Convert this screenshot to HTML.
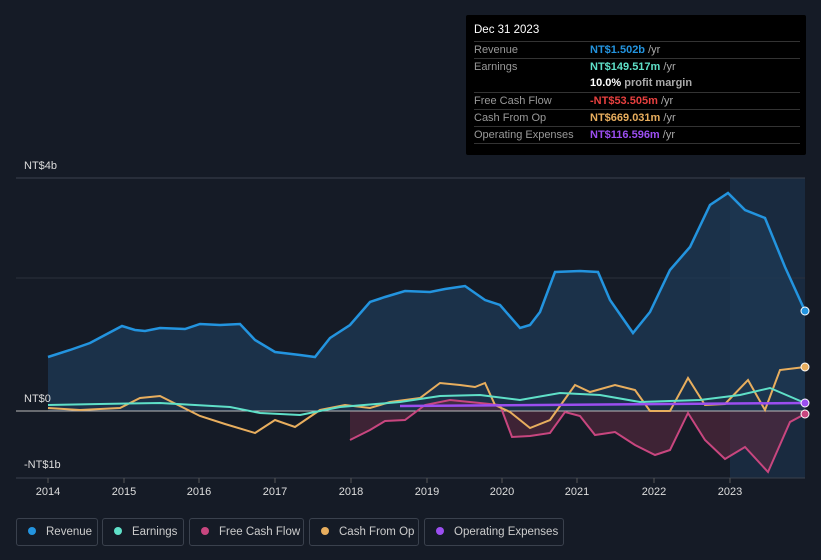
<!DOCTYPE html>
<html><head><style>
body{margin:0;width:821px;height:560px;background:#151b26;font-family:"Liberation Sans",sans-serif;overflow:hidden;position:relative}
.tt{position:absolute;left:466px;top:15px;width:340px;height:140px;background:#000;border-radius:2px}
.tt .h{position:absolute;left:8px;top:9px;color:#fff;font-size:11.5px}
.row{position:absolute;left:8px;width:326px;border-top:1px solid #333;font-size:11px;color:#999;height:17px;line-height:17px}
.row b{position:absolute;left:116px;font-weight:bold}
.row span.u{color:#aaa}
.leg{position:absolute;top:518px;height:28px;border:1px solid #3a414d;border-radius:3px;color:#ccc;font-size:11.5px;line-height:26px;box-sizing:border-box;white-space:nowrap;overflow:hidden}
.leg i{display:inline-block;width:8px;height:8px;border-radius:50%;margin:0 10px 0 11px;vertical-align:0}
.yl{position:absolute;color:#ddd;font-size:11px}
.xl{position:absolute;top:486px;color:#ddd;font-size:11px;width:40px;text-align:center}
</style></head><body>
<svg width="821" height="560" style="position:absolute;left:0;top:0">
<rect x="730" y="178" width="75" height="300" fill="#1c3550" opacity="0.6"/>
<line x1="16" y1="178" x2="805" y2="178" stroke="#3a414d"/>
<line x1="16" y1="278" x2="805" y2="278" stroke="#2a303c"/>
<line x1="16" y1="478" x2="805" y2="478" stroke="#3a414d"/>
<path d="M48,357 L70,350 L90,343 L105,335 L122,326 L135,330 L145,331 L160,328 L185,329 L200,324 L220,325 L240,324 L255,340 L275,352 L300,355 L315,357 L330,338 L350,325 L370,302 L385,297 L405,291 L430,292 L445,289 L465,286 L485,300 L500,305 L520,328 L530,325 L540,312 L555,272 L580,271 L598,272 L610,300 L633,333 L650,312 L670,270 L690,247 L710,205 L728,193 L745,210 L765,218 L785,267 L805,311 L805,411 L48,411Z" fill="#1d3a55" opacity="0.75"/>
<path d="M350,440 L370,430 L385,421 L405,420 L425,405 L450,400 L480,403 L500,405 L512,437 L530,436 L550,433 L565,412 L580,416 L595,435 L615,432 L635,445 L655,455 L670,450 L688,413 L705,440 L725,459 L745,447 L768,472 L790,422 L805,414 L805,411 L350,411Z" fill="#5a2a3f" opacity="0.6"/>
<line x1="16" y1="411" x2="805" y2="411" stroke="#bbb"/>
<path d="M48,357 L70,350 L90,343 L105,335 L122,326 L135,330 L145,331 L160,328 L185,329 L200,324 L220,325 L240,324 L255,340 L275,352 L300,355 L315,357 L330,338 L350,325 L370,302 L385,297 L405,291 L430,292 L445,289 L465,286 L485,300 L500,305 L520,328 L530,325 L540,312 L555,272 L580,271 L598,272 L610,300 L633,333 L650,312 L670,270 L690,247 L710,205 L728,193 L745,210 L765,218 L785,267 L805,311" fill="none" stroke="#2394df" stroke-width="2.5"/>
<path d="M350,440 L370,430 L385,421 L405,420 L425,405 L450,400 L480,403 L500,405 L512,437 L530,436 L550,433 L565,412 L580,416 L595,435 L615,432 L635,445 L655,455 L670,450 L688,413 L705,440 L725,459 L745,447 L768,472 L790,422 L805,414" fill="none" stroke="#c8467f" stroke-width="2"/>
<path d="M48,408 L80,410 L120,408 L140,398 L160,396 L180,406 L200,416 L225,424 L255,433 L275,420 L295,427 L320,410 L345,405 L370,408 L390,402 L420,398 L440,383 L460,385 L475,387 L485,383 L495,405 L510,412 L530,428 L550,420 L575,385 L590,392 L615,385 L635,390 L650,411 L670,411 L688,378 L705,405 L725,404 L748,380 L765,410 L780,370 L805,367" fill="none" stroke="#e8ae5e" stroke-width="2"/>
<path d="M48,405 L100,404 L160,403 L230,407 L260,413 L300,415 L340,407 L400,402 L440,396 L480,395 L520,400 L560,393 L600,395 L640,402 L700,400 L740,395 L770,388 L805,403" fill="none" stroke="#5fe0c8" stroke-width="2"/>
<path d="M400,406 L805,403" fill="none" stroke="#9b4ef0" stroke-width="2.5"/>
<circle cx="805" cy="311" r="4" fill="#2394df" stroke="#fff" stroke-width="1"/>
<circle cx="805" cy="367" r="4" fill="#e8ae5e" stroke="#fff" stroke-width="1"/>
<circle cx="805" cy="403" r="4" fill="#9b4ef0" stroke="#fff" stroke-width="1"/>
<circle cx="805" cy="414" r="4" fill="#c8467f" stroke="#fff" stroke-width="1"/>
<g stroke="#555"><line x1="48" y1="478" x2="48" y2="483"/><line x1="124" y1="478" x2="124" y2="483"/><line x1="199" y1="478" x2="199" y2="483"/><line x1="275" y1="478" x2="275" y2="483"/><line x1="351" y1="478" x2="351" y2="483"/><line x1="427" y1="478" x2="427" y2="483"/><line x1="502" y1="478" x2="502" y2="483"/><line x1="577" y1="478" x2="577" y2="483"/><line x1="654" y1="478" x2="654" y2="483"/><line x1="730" y1="478" x2="730" y2="483"/></g>
</svg>
<div class="yl" style="left:24px;top:160px">NT$4b</div>
<div class="yl" style="left:24px;top:393px">NT$0</div>
<div class="yl" style="left:24px;top:459px">-NT$1b</div>
<div class="xl" style="left:28px">2014</div><div class="xl" style="left:104px">2015</div><div class="xl" style="left:179px">2016</div><div class="xl" style="left:255px">2017</div><div class="xl" style="left:331px">2018</div><div class="xl" style="left:407px">2019</div><div class="xl" style="left:482px">2020</div><div class="xl" style="left:557px">2021</div><div class="xl" style="left:634px">2022</div><div class="xl" style="left:710px">2023</div>
<div class="tt">
<div class="h">Dec 31 2023</div>
<div class="row" style="top:26px">Revenue<b style="color:#2394df">NT$1.502b <span class="u" style="font-weight:normal">/yr</span></b></div>
<div class="row" style="top:43px">Earnings<b style="color:#5fe0c8">NT$149.517m <span class="u" style="font-weight:normal">/yr</span></b></div>
<div class="row" style="top:60px;border:none"><b style="color:#fff">10.0% <span class="u">profit margin</span></b></div>
<div class="row" style="top:77px">Free Cash Flow<b style="color:#e8403f">-NT$53.505m <span class="u" style="font-weight:normal">/yr</span></b></div>
<div class="row" style="top:94px">Cash From Op<b style="color:#e8ae5e">NT$669.031m <span class="u" style="font-weight:normal">/yr</span></b></div>
<div class="row" style="top:111px">Operating Expenses<b style="color:#9b4ef0">NT$116.596m <span class="u" style="font-weight:normal">/yr</span></b></div>
<div class="row" style="top:128px;height:0"></div>
</div>
<div class="leg" style="left:16px;width:82px"><i style="background:#2394df"></i>Revenue</div>
<div class="leg" style="left:102px;width:82px"><i style="background:#5fe0c8"></i>Earnings</div>
<div class="leg" style="left:189px;width:115px"><i style="background:#c8467f"></i>Free Cash Flow</div>
<div class="leg" style="left:309px;width:110px"><i style="background:#e8ae5e"></i>Cash From Op</div>
<div class="leg" style="left:424px;width:140px"><i style="background:#9b4ef0"></i>Operating Expenses</div>
</body></html>
